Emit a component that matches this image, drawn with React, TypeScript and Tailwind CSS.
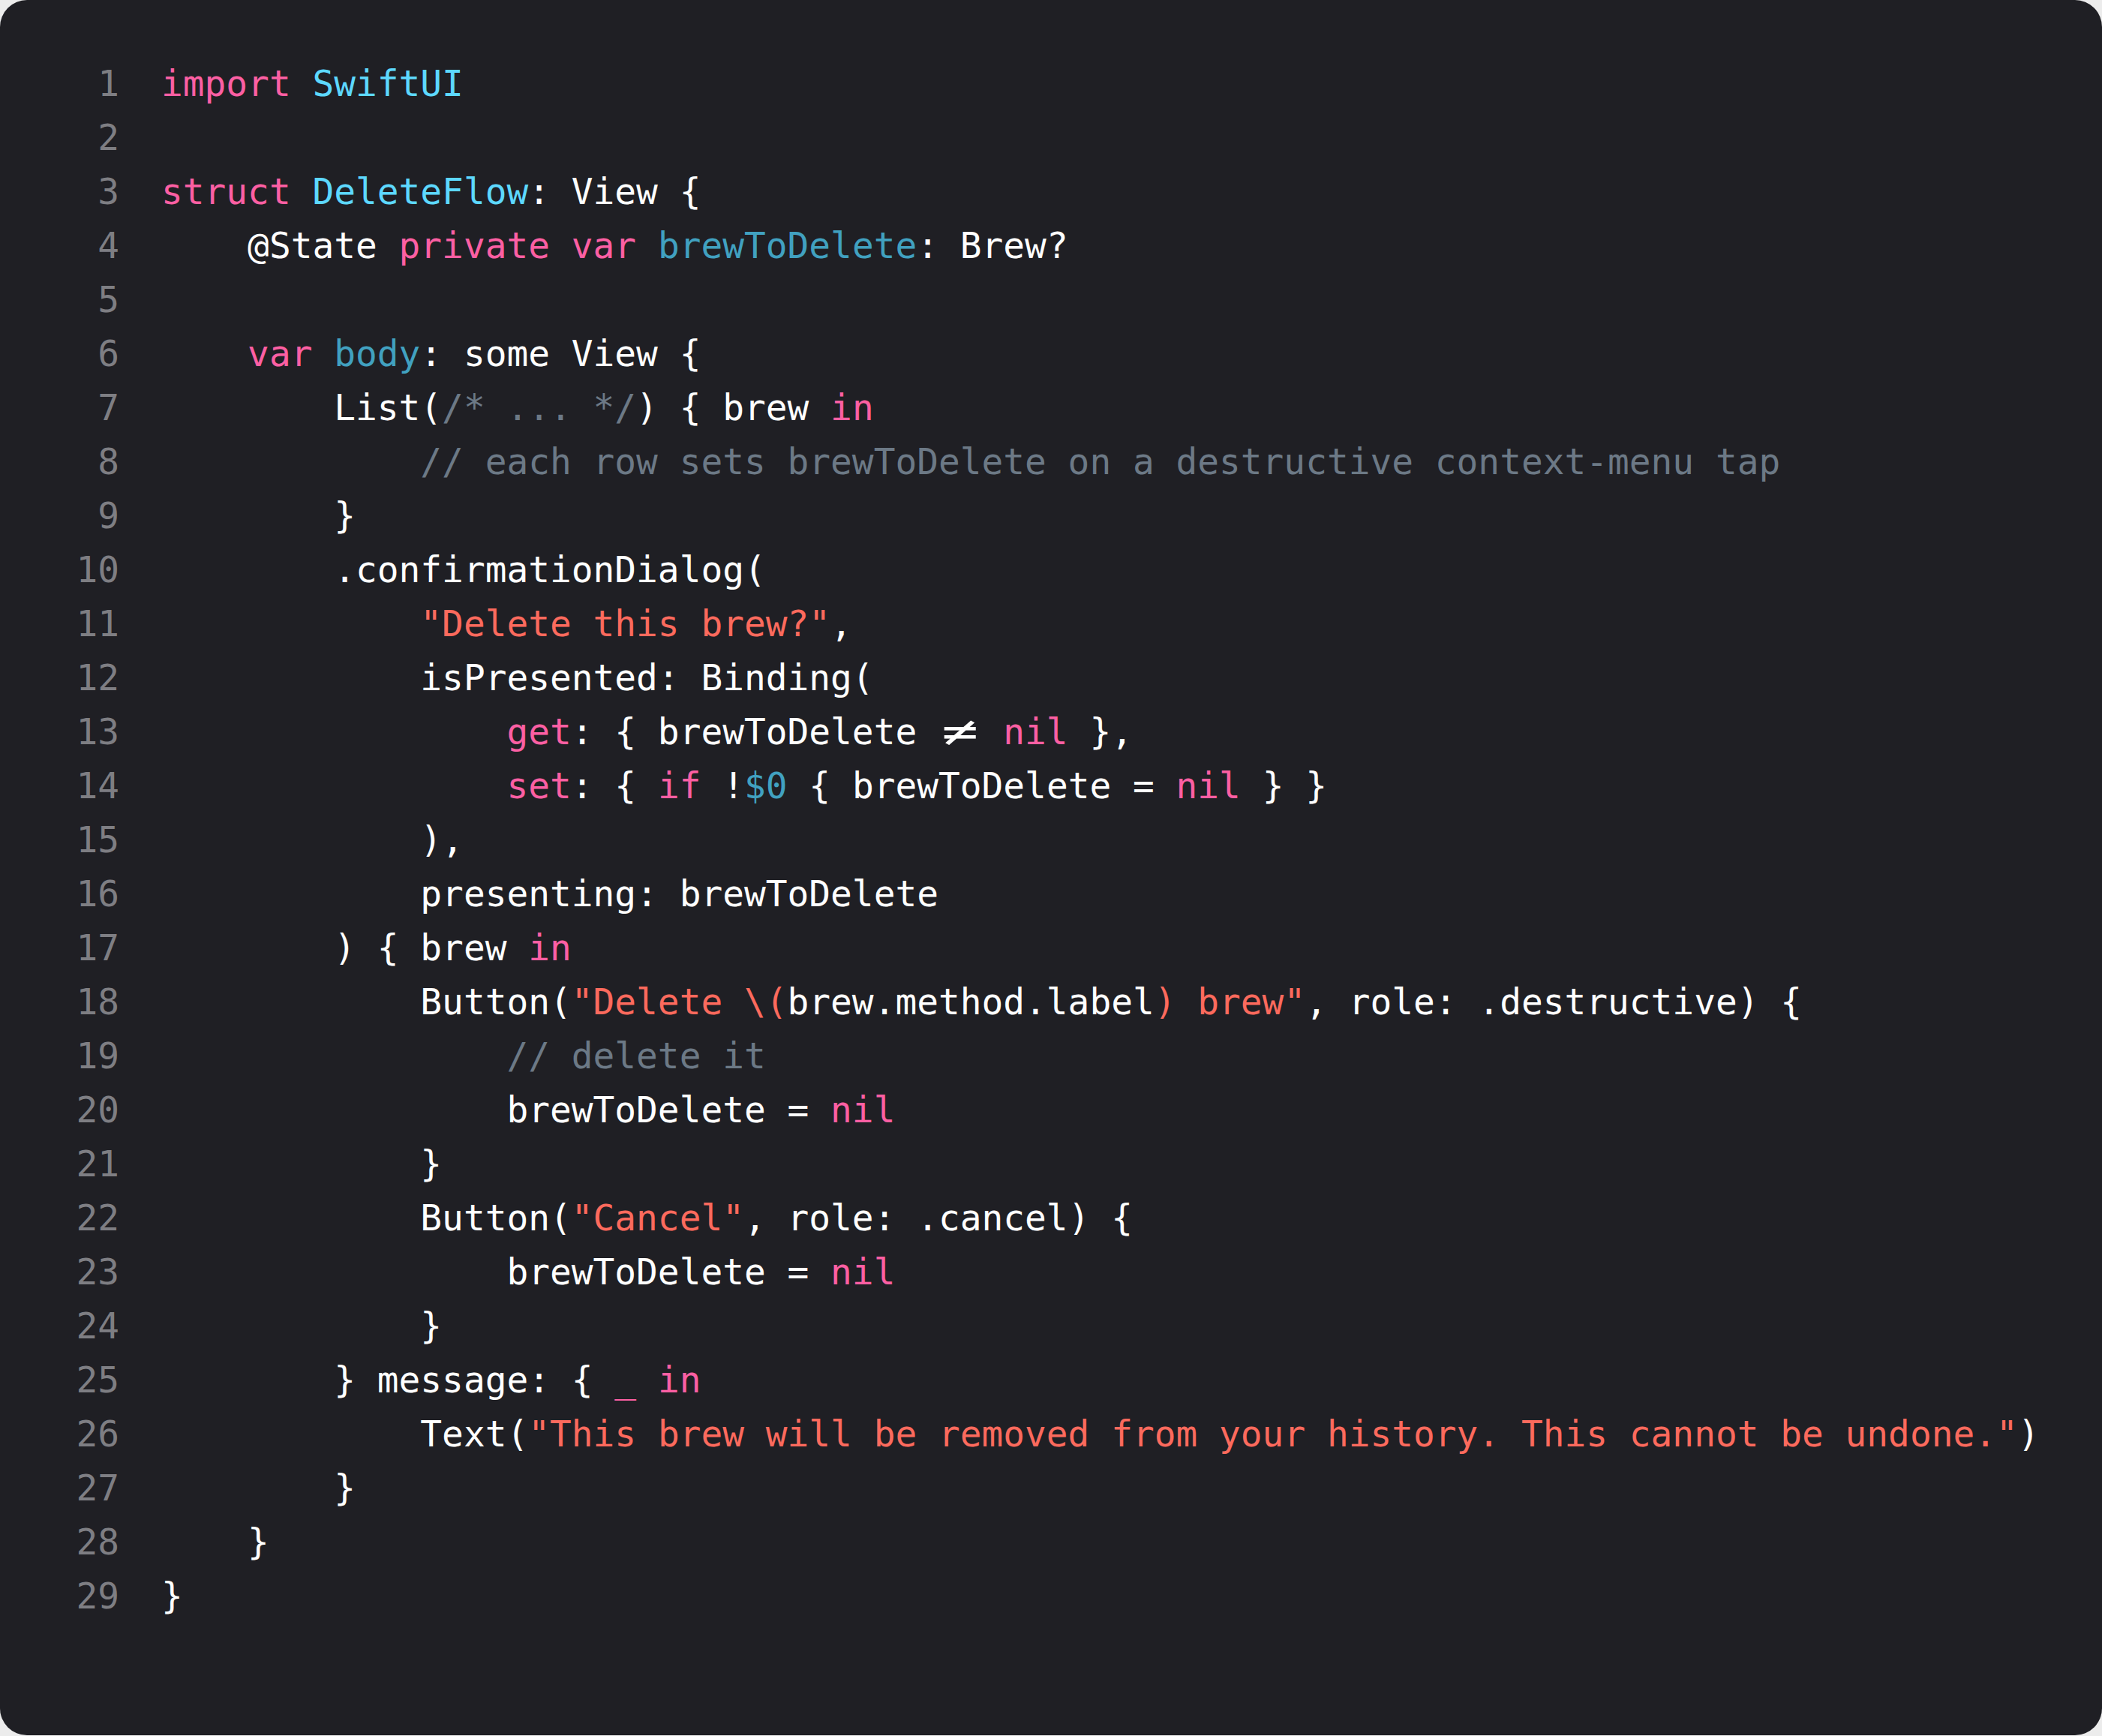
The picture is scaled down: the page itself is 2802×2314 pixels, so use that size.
type Kind = 'p' | 'k' | 't' | 'v' | 's' | 'c' | 'ne';

type Token = [Kind, string];

const color: Record<Kind, string> = {
  p: 'text-white',
  k: 'text-[#fc5fa3]',
  t: 'text-[#5dd8ff]',
  v: 'text-[#41a1c0]',
  s: 'text-[#fc6a5d]',
  c: 'text-[#6c7986]',
  ne: 'text-white',
};

const sp = (n: number): Token => ['p', ' '.repeat(n)];

const lines: Token[][] = [
  [['k', 'import'], ['p', ' '], ['t', 'SwiftUI']],
  [],
  [['k', 'struct'], ['p', ' '], ['t', 'DeleteFlow'], ['p', ': View {']],
  [sp(4), ['p', '@State '], ['k', 'private'], ['p', ' '], ['k', 'var'], ['p', ' '], ['v', 'brewToDelete'], ['p', ': Brew?']],
  [],
  [sp(4), ['k', 'var'], ['p', ' '], ['v', 'body'], ['p', ': some View {']],
  [sp(8), ['p', 'List('], ['c', '/* ... */'], ['p', ') { brew '], ['k', 'in']],
  [sp(12), ['c', '// each row sets brewToDelete on a destructive context-menu tap']],
  [sp(8), ['p', '}']],
  [sp(8), ['p', '.confirmationDialog(']],
  [sp(12), ['s', '"Delete this brew?"'], ['p', ',']],
  [sp(12), ['p', 'isPresented: Binding(']],
  [sp(16), ['k', 'get'], ['p', ': { brewToDelete '], ['ne', '≠'], ['p', ' '], ['k', 'nil'], ['p', ' },']],
  [sp(16), ['k', 'set'], ['p', ': { '], ['k', 'if'], ['p', ' !'], ['v', '$0'], ['p', ' { brewToDelete = '], ['k', 'nil'], ['p', ' } }']],
  [sp(12), ['p', '),']],
  [sp(12), ['p', 'presenting: brewToDelete']],
  [sp(8), ['p', ') { brew '], ['k', 'in']],
  [sp(12), ['p', 'Button('], ['s', '"Delete \\('], ['p', 'brew.method.label'], ['s', ') brew"'], ['p', ', role: .destructive) {']],
  [sp(16), ['c', '// delete it']],
  [sp(16), ['p', 'brewToDelete = '], ['k', 'nil']],
  [sp(12), ['p', '}']],
  [sp(12), ['p', 'Button('], ['s', '"Cancel"'], ['p', ', role: .cancel) {']],
  [sp(16), ['p', 'brewToDelete = '], ['k', 'nil']],
  [sp(12), ['p', '}']],
  [sp(8), ['p', '} message: { '], ['k', '_'], ['p', ' '], ['k', 'in']],
  [sp(12), ['p', 'Text('], ['s', '"This brew will be removed from your history. This cannot be undone."'], ['p', ')']],
  [sp(8), ['p', '}']],
  [sp(4), ['p', '}']],
  [['p', '}']],
];

export default function App() {
  return (
    <div className="w-[2802px] h-[2314px] bg-[#ececec]">
      <div className="h-[2313px] rounded-[36px] bg-[#1f1f24] pt-[76px] pl-[101px] font-['DejaVu_Sans_Mono',monospace] text-[47.8px] leading-[72px]">
        {lines.map((tokens, i) => (
          <div key={i} className="flex">
            <div className="w-[58px] shrink-0 text-right text-[#7e7e83]">{i + 1}</div>
            <div className="ml-[56px] whitespace-pre">
              {tokens.map(([kind, text], j) =>
                kind === 'ne' ? (
                  // the != ligature spans two cells in the editor font
                  <span key={j} className="inline-block w-[2ch] text-center text-white">
                    <span className="inline-block scale-x-[1.7] scale-y-[1.15]">{text}</span>
                  </span>
                ) : (
                  <span key={j} className={color[kind]}>
                    {text}
                  </span>
                )
              )}
              {tokens.length === 0 ? ' ' : null}
            </div>
          </div>
        ))}
      </div>
    </div>
  );
}
